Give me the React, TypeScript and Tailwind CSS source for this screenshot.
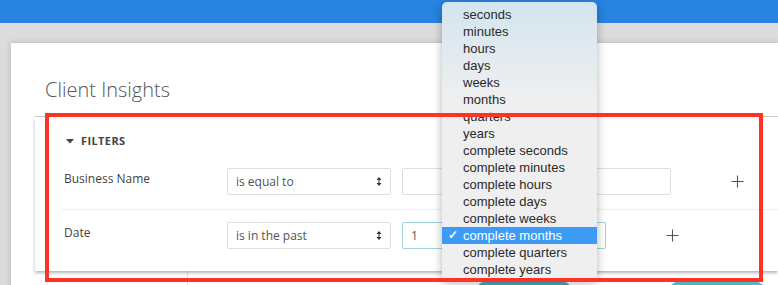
import { useState } from "react";

const units = [
    "seconds",
    "minutes",
    "hours",
    "days",
    "weeks",
    "months",
    "quarters",
    "years",
    "complete seconds",
    "complete minutes",
    "complete hours",
    "complete days",
    "complete weeks",
    "complete months",
    "complete quarters",
    "complete years",
];

function Plus() {
    return (
        <svg width="13" height="13" viewBox="0 0 13 13" className="text-[#555]">
            <path d="M6.5 0.5v12M0.5 6.5h12" stroke="currentColor" strokeWidth="1.1" fill="none" />
        </svg>
    );
}

function SelectBox({ label }: { label: string }) {
    return (
        <div className="w-[164px] h-[27px] border border-[#dedede] rounded-[2px] bg-white flex items-center justify-between pl-[8px] pr-[8px] text-[12px] text-[#555]">
            <span>{label}</span>
            <svg width="6" height="9" viewBox="0 0 6 9" className="text-[#333]">
                <path d="M3 0L5.5 3H0.5z M3 9L5.5 6H0.5z M2.5 3h1v3h-1z" fill="currentColor" />
            </svg>
        </div>
    );
}

export default function App() {
    const [selected] = useState("complete months");

    return (
        <div
            className="relative w-[778px] h-[285px] overflow-hidden bg-[#dcdcdc]"
            style={{ fontFamily: '"Open Sans", sans-serif' }}
        >
            <div className="h-[23px] bg-[#2882df]" />

            <div className="ml-[11px] mt-[20px] bg-white shadow-[0_0_6px_rgba(0,0,0,0.18)] h-[260px]">
                <h1 className="pl-[34px] pt-[33px] leading-[28px] text-[20px] font-light text-[#555] mb-[12px]">
                    Client Insights
                </h1>

                <div className="ml-[24px] border-t border-[#cfcfcf]">
                    <div className="pt-[16px] pb-[22px] shadow-[0_2px_3px_rgba(60,70,90,0.4)] relative">
                        <div className="flex items-center pl-[31px] h-[16px] text-[11px] font-bold tracking-[0.4px] text-[#444]">
                            <svg width="8" height="5" viewBox="0 0 8 5" className="mr-[7px]">
                                <path d="M0 0h8L4 4.5z" fill="#444" />
                            </svg>
                            FILTERS
                        </div>

                        <div className="ml-[27px] mt-[19px] flex items-start pb-[14px] border-b border-[#eeeeee]">
                            <div className="w-[165px] pl-[2px] pt-[2px] text-[12px] text-[#444]">Business Name</div>
                            <SelectBox label="is equal to" />
                            <div className="ml-[11px] w-[269px] h-[27px] border border-[#dedede] rounded-[2px]" />
                            <div className="ml-[60px] h-[27px] flex items-center">
                                <Plus />
                            </div>
                        </div>

                        <div className="ml-[27px] pt-[12px] flex items-start">
                            <div className="w-[165px] pl-[2px] pt-[2px] text-[12px] text-[#444]">Date</div>
                            <SelectBox label="is in the past" />
                            <div className="ml-[11px] w-[204px] h-[27px] border border-[#9fd4de] rounded-[2px] flex items-center pl-[8px] text-[12px] text-[#555]">
                                1
                            </div>
                            <div className="ml-[60px] h-[27px] flex items-center">
                                <Plus />
                            </div>
                        </div>
                    </div>

                    <div className="flex h-[20px]">
                        <div className="w-[153px] border-r border-[#e4e4e4]" />
                        <div className="ml-[286px] mt-[10px] w-[100px] h-[20px] rounded-t-[14px] bg-[#4aa9c0]" />
                        <div className="ml-[93px] mt-[10px] w-[100px] h-[20px] rounded-t-[14px] bg-[#52b6ce]" />
                    </div>
                </div>
            </div>

            {/* native select popup */}
            <div
                className="absolute left-[442px] top-[2px] w-[155px] rounded-[5px] pt-[4px] pb-[2px] bg-gradient-to-b from-[#d2e5ef] via-[#efefef] via-[35%] to-[#efefef] shadow-[0_3px_10px_rgba(0,0,0,0.3)] z-10"
                style={{ fontFamily: '"Liberation Sans", Arial, sans-serif' }}
            >
                {units.map((u) => {
                    const active = u === selected;
                    return (
                        <div
                            key={u}
                            className={
                                active
                                    ? "relative h-[17px] leading-[17px] pl-[21px] text-[13px] bg-[#3d9bf5] text-white"
                                    : "relative h-[17px] leading-[17px] pl-[21px] text-[13px] text-[#2a2a2a]"
                            }
                        >
                            {active && <span className="absolute left-[6px] top-0 text-[12px] font-bold">✓</span>}
                            {u}
                        </div>
                    );
                })}
            </div>

            {/* annotation */}
            <div className="absolute left-[45px] top-[113px] w-[718px] h-[169px] border-[4px] border-[#ff3324] z-20 pointer-events-none" />
        </div>
    );
}
